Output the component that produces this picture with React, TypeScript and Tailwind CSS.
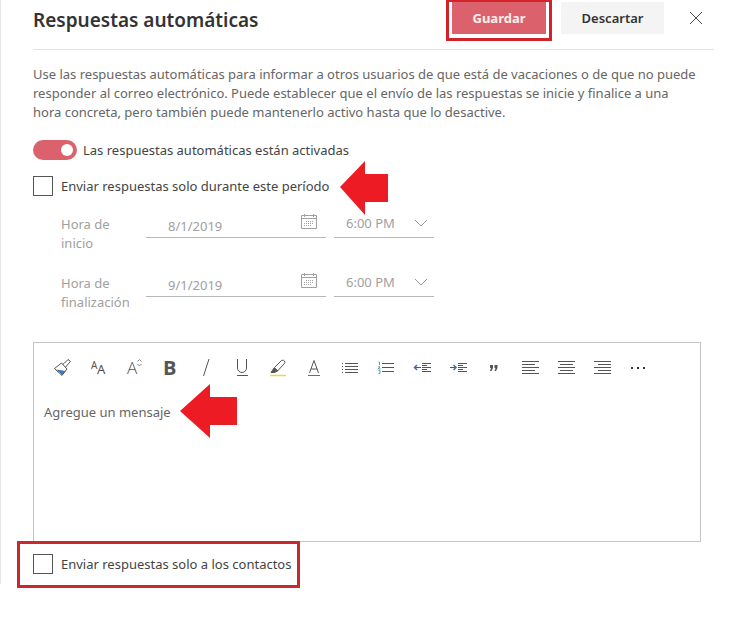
import { useState } from "react";
import type { ReactNode } from "react";

const ToolIcon = ({ children }: { children: ReactNode }) => (
    <svg
        width="20"
        height="20"
        viewBox="0 0 20 20"
        fill="none"
        stroke="#555"
        className="overflow-visible"
        aria-hidden="true"
    >
        {children}
    </svg>
);

const AlignIcon = ({ rows }: { rows: number[][] }) => (
    <ToolIcon>
        {rows.map(([x1, x2], i) => (
            <path key={i} d={`M${x1} ${3.5 + i * 3}H${x2}`} />
        ))}
    </ToolIcon>
);

const CalendarIcon = () => (
    <svg
        width="18"
        height="18"
        viewBox="0 0 18 18"
        fill="none"
        stroke="#a0a0a0"
        aria-hidden="true"
    >
        <path d="M1.5 2.5h15v13h-15zM1.5 5.5h15M4.5 1v3M13.5 1v3" />
        <path
            d="M6 8.5h8M4 10.5h10M4 12.5h8"
            strokeDasharray="1 1"
        />
    </svg>
);

const tools = [
    {
        label: "Copiar formato",
        icon: (
            <ToolIcon>
                <path
                    d="M4.5 11.5l9 1.5-3.5 4z"
                    fill="#3b78c4"
                    stroke="none"
                />
                <path
                    d="M2.5 10.5L9.500 5l5.500 6-5 6.500zM10.500 6.500l2 -1.500 3.500-3.500 2.500 2-4 4.500-1 1.500M5.500 13.500l1.500-1"
                    strokeLinejoin="round"
                />
            </ToolIcon>
        ),
    },
    {
        label: "Fuente",
        icon: (
            <ToolIcon>
                <g fill="#555" stroke="none" className="font-['Noto_Sans']">
                    <text x="3" y="11" fontSize="10">
                        A
                    </text>
                    <text x="9" y="16" fontSize="13">
                        A
                    </text>
                </g>
            </ToolIcon>
        ),
    },
    {
        label: "Tamaño de fuente",
        icon: (
            <ToolIcon>
                <text
                    x="3"
                    y="16"
                    fontSize="17"
                    fill="#555"
                    stroke="none"
                    className="font-['Open_Sans'] font-light"
                >
                    A
                </text>
                <path d="M13.5 3.5l2-2 2 2M13.5 6l2 2 2-2" stroke="#888" />
            </ToolIcon>
        ),
    },
    {
        label: "Negrita",
        icon: (
            <ToolIcon>
                <text
                    x="3"
                    y="17"
                    fontSize="20"
                    fill="#555"
                    stroke="none"
                    className="font-['Open_Sans'] font-bold"
                >
                    B
                </text>
            </ToolIcon>
        ),
    },
    {
        label: "Cursiva",
        icon: (
            <ToolIcon>
                <path d="M13 1L7.5 18" />
            </ToolIcon>
        ),
    },
    {
        label: "Subrayado",
        icon: (
            <ToolIcon>
                <path d="M5.5 1v9a4.5 4.5 0 0 0 9 0V1M5 17.5h11" />
            </ToolIcon>
        ),
    },
    {
        label: "Resaltado",
        icon: (
            <ToolIcon>
                <path d="M2 17.5h16" stroke="#e6dc3c" strokeWidth="1.5" />
                <path d="M3 14.5l3-4.500 3.500 3-3 1.500z" fill="#555" />
                <path
                    d="M6.5 9.5l7-7q2-1 3 .5t-.5 3L9.500 13z"
                    strokeLinejoin="round"
                />
            </ToolIcon>
        ),
    },
    {
        label: "Color de fuente",
        icon: (
            <ToolIcon>
                <path d="M5.5 15L10 2.5 14.5 15M7 11h6" />
                <path d="M4 17.5h12" stroke="#b5502f" />
            </ToolIcon>
        ),
    },
    {
        label: "Viñetas",
        icon: (
            <ToolIcon>
                <path d="M5 5.5h13M5 8.5h13M5 11.5h13M5 14.5h13M2 5.5h1M2 8.5h1M2 11.5h1M2 14.5h1" />
            </ToolIcon>
        ),
    },
    {
        label: "Numeración",
        icon: (
            <ToolIcon>
                <path d="M6 5.5h12M6 9.5h12M6 13.5h12" />
                <path
                    d="M2.5 4h1v3M2.5 8.5h1v1.5h-1v1h2M2.5 12.5h1.5v3h-1.5"
                    stroke="#4aa3b8"
                />
            </ToolIcon>
        ),
    },
    {
        label: "Reducir sangría",
        icon: (
            <ToolIcon>
                <path d="M10 5.5h9M10 7.5h5M10 9.5h9M10 11.5h5M10 13.5h9" />
                <path d="M9 9.5H2" />
                <path d="M5 7L2.5 9.5 5 12" stroke="#3f6fb5" strokeWidth="1.5" />
            </ToolIcon>
        ),
    },
    {
        label: "Aumentar sangría",
        icon: (
            <ToolIcon>
                <path d="M10 5.5h9M10 7.5h5M10 9.5h9M10 11.5h5M10 13.5h9" />
                <path d="M2 9.5h6" />
                <path d="M5.5 7L8 9.5 5.5 12" stroke="#3f6fb5" strokeWidth="1.5" />
            </ToolIcon>
        ),
    },
    {
        label: "Cita",
        icon: (
            <ToolIcon>
                <path
                    d="M6 7h3v3l-1.5 3H6l1-3H6zM10.5 7h3v3L12 13h-1.5l1-3h-1z"
                    fill="#555"
                    stroke="none"
                />
            </ToolIcon>
        ),
    },
    {
        label: "Alinear a la izquierda",
        icon: (
            <AlignIcon
                rows={[
                    [2, 19],
                    [2, 15],
                    [2, 19],
                    [2, 15],
                    [2, 19],
                ]}
            />
        ),
    },
    {
        label: "Centrar",
        icon: (
            <AlignIcon
                rows={[
                    [2, 19],
                    [4, 17],
                    [2, 19],
                    [4, 17],
                    [2, 19],
                ]}
            />
        ),
    },
    {
        label: "Alinear a la derecha",
        icon: (
            <AlignIcon
                rows={[
                    [2, 19],
                    [6, 19],
                    [2, 19],
                    [6, 19],
                    [2, 19],
                ]}
            />
        ),
    },
    {
        label: "Más opciones",
        icon: (
            <ToolIcon>
                <path
                    d="M3 9h2v2H3zM9 9h2v2H9zM15 9h2v2h-2z"
                    fill="#333"
                    stroke="none"
                />
            </ToolIcon>
        ),
    },
];

const Checkbox = ({ id, label }: { id: string; label: string }) => (
    <div className="flex items-center gap-2">
        <input
            id={id}
            type="checkbox"
            className="size-5 shrink-0 appearance-none border border-[#555] bg-white checked:bg-[#db626c]"
        />
        <label htmlFor={id} className="whitespace-nowrap">
            {label}
        </label>
    </div>
);

const DateRow = ({
    id,
    label,
    date,
}: {
    id: string;
    label: string;
    date: string;
}) => (
    <div className="flex items-start text-[#a0a0a0]">
        <label htmlFor={id} className="w-[85px] pr-2">
            {label}
        </label>
        <div className="flex h-[23px] w-[180px] items-center border-b border-[#b8b8b8]">
            <input
                id={id}
                type="text"
                defaultValue={date}
                disabled
                className="min-w-0 flex-1 bg-transparent pl-[22px]"
            />
            <button
                type="button"
                aria-label="Abrir calendario"
                disabled
                className="mr-2 mb-2"
            >
                <CalendarIcon />
            </button>
        </div>
        <div className="relative ml-2 h-[23px] w-[100px] border-b border-[#b8b8b8]">
            <select
                aria-label={`${label}, hora`}
                disabled
                className="block w-full appearance-none pl-3 leading-4 opacity-100"
            >
                <option>6:00 PM</option>
            </select>
            <svg
                width="14"
                height="8"
                viewBox="0 0 14 8"
                fill="none"
                stroke="#999"
                className="pointer-events-none absolute top-1 right-1.5"
                aria-hidden="true"
            >
                <path d="M1 1l6 6 6-6" />
            </svg>
        </div>
    </div>
);

export default function App() {
    const [enabled, setEnabled] = useState(true);

    return (
        <div className="bg-white pb-10">
            <main className="border-l border-[#e6e6e6] pr-9 pb-2.5 pl-8 font-['Noto_Sans','Open_Sans',sans-serif] text-[13px] leading-[19px] text-[#444]">
                <header className="flex h-[50px] items-start justify-between border-b border-[#e4e4e4]">
                    <h1 className="pt-1.5 text-[19px] leading-7 font-semibold text-[#333]">
                        Respuestas automáticas
                    </h1>
                    <div className="mr-0.5 flex items-start">
                        <div className="h-[41px] w-[106px] border-3 border-t-2 border-[#d2232a] px-[3px]">
                            <button
                                type="button"
                                className="h-8 w-full bg-[#db626c] font-bold text-[#fff0ee]"
                            >
                                Guardar
                            </button>
                        </div>
                        <button
                            type="button"
                            className="mt-0.5 ml-[9px] h-8 w-[103px] bg-[#f4f4f4] font-semibold text-[#333]"
                        >
                            Descartar
                        </button>
                        <button
                            type="button"
                            aria-label="Cerrar"
                            className="mt-0.5 ml-4 flex size-8 items-center justify-center"
                        >
                            <svg
                                width="14"
                                height="14"
                                viewBox="0 0 14 14"
                                stroke="#444"
                                aria-hidden="true"
                            >
                                <path d="M1 1l12 12M13 1L1 13" />
                            </svg>
                        </button>
                    </div>
                </header>

                <div className="pt-[15px] pr-[13px]">
                    <p className="pr-[3px] text-[#666]">
                        Use las respuestas automáticas para informar a otros
                        usuarios de que está de vacaciones o de que no puede
                        responder al correo electrónico. Puede establecer que
                        el envío de las respuestas se inicie y finalice a una
                        hora concreta, pero también puede mantenerlo activo
                        hasta que lo desactive.
                    </p>

                    <div className="mt-[18px] flex items-center gap-1.5">
                        <button
                            id="auto"
                            type="button"
                            role="switch"
                            aria-checked={enabled}
                            onClick={() => setEnabled(!enabled)}
                            className="flex h-5 w-11 items-center justify-end rounded-full bg-[#db626c] px-1 aria-[checked=false]:justify-start aria-[checked=false]:bg-gray-400"
                        >
                            <span className="size-3 rounded-full bg-white" />
                        </button>
                        <label htmlFor="auto">
                            Las respuestas automáticas están activadas
                        </label>
                    </div>

                    <div className="relative mt-4 w-fit">
                        <Checkbox
                            id="period"
                            label="Enviar respuestas solo durante este período"
                        />
                        <svg
                            width="48"
                            height="54"
                            viewBox="0 0 48 54"
                            fill="#ed1c24"
                            className="absolute -top-[15px] left-[307px]"
                            aria-hidden="true"
                        >
                            <path d="M0 26L25 0v13h23v28H25v13z" />
                        </svg>
                    </div>

                    <div className="mt-[19px] flex flex-col gap-[21px] pl-7">
                        <DateRow
                            id="start"
                            label="Hora de inicio"
                            date="8/1/2019"
                        />
                        <DateRow
                            id="end"
                            label="Hora de finalización"
                            date="9/1/2019"
                        />
                    </div>

                    <div className="relative mt-[30px] border border-[#c4c4c4]">
                        <div className="flex h-[50px] items-center pl-2.5">
                            {tools.map((tool) => (
                                <button
                                    key={tool.label}
                                    type="button"
                                    aria-label={tool.label}
                                    className="flex h-8 w-9 items-center justify-center"
                                >
                                    {tool.icon}
                                </button>
                            ))}
                        </div>
                        <textarea
                            aria-label="Mensaje"
                            placeholder="Agregue un mensaje"
                            className="block h-[148px] w-full resize-none px-2.5 pt-2.5 placeholder:text-[#666]"
                        />
                        <svg
                            width="57"
                            height="54"
                            viewBox="0 0 57 54"
                            fill="#ed1c24"
                            className="absolute top-[41px] left-[146px]"
                            aria-hidden="true"
                        >
                            <path d="M0 27L30 0v13h27v28H30v13z" />
                        </svg>
                    </div>

                    <div className="relative -mt-px -mb-3.5 -ml-4 w-[283px] border-3 border-[#c9282d] px-[13px] pt-2.5 pb-[11px]">
                        <Checkbox
                            id="contacts"
                            label="Enviar respuestas solo a los contactos"
                        />
                    </div>
                </div>
            </main>
        </div>
    );
}
